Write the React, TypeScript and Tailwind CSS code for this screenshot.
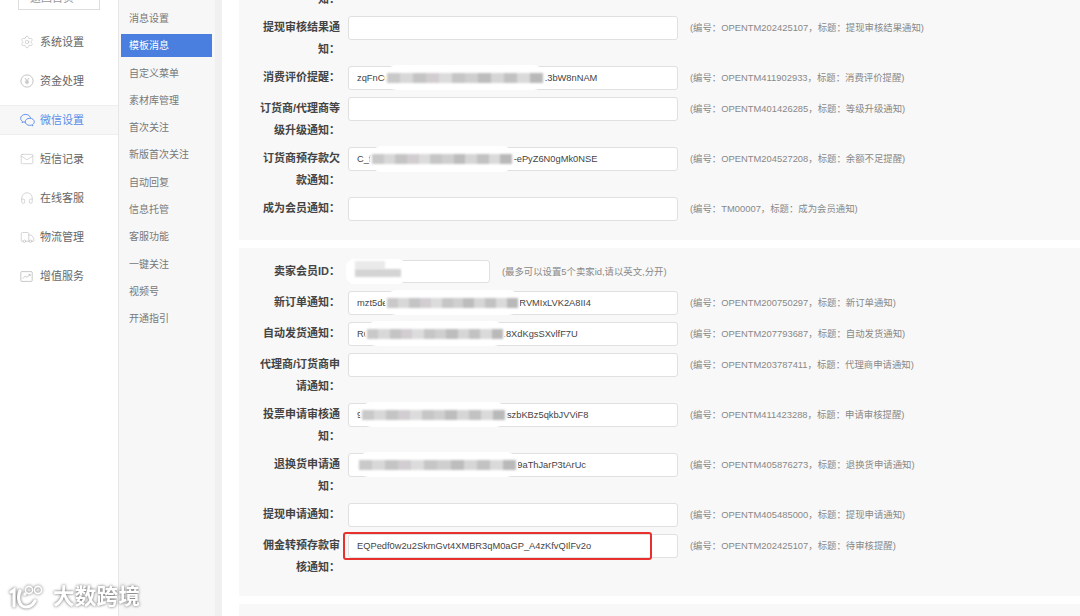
import { Settings, Mail, Headphones, Truck, ChevronDown } from "lucide-react";
import type { ReactNode } from "react";

const FONT = "font-['Liberation_Sans','Noto_Sans_CJK_SC',sans-serif]";

function YenIcon() {
  return (
    <svg viewBox="0 0 16 16" className="w-[14px] h-[14px]" fill="none" stroke="#bbb" strokeWidth="1">
      <circle cx="8" cy="8" r="7" />
      <path d="M5.6 4.6 8 7.6l2.4-3M8 7.6v4.2M5.8 8.2h4.4M5.8 10h4.4" />
    </svg>
  );
}

function WechatIcon() {
  return (
    <svg viewBox="0 0 16 16" className="w-[15px] h-[15px]" fill="none" stroke="#5b8de8" strokeWidth="1">
      <path d="M6 1.5C3 1.5.7 3.4.7 5.7c0 1.3.7 2.4 1.9 3.2l-.4 1.5 1.7-.9c.6.2 1.3.3 2 .3" />
      <path d="M11.3 5.2c-.6-2-2.7-3.7-5.3-3.7" />
      <path d="M10.4 5.6c-2.7 0-4.8 1.7-4.8 3.8s2.1 3.8 4.8 3.8c.6 0 1.2-.1 1.7-.3l1.6.9-.4-1.4c1.2-.7 1.9-1.8 1.9-3 0-2.1-2.1-3.8-4.8-3.8Z" />
    </svg>
  );
}

function ChartIcon() {
  return (
    <svg viewBox="0 0 16 16" className="w-[13px] h-[13px]" fill="none" stroke="#bbb" strokeWidth="1">
      <rect x="1" y="2" width="14" height="12" rx="1" />
      <path d="m3.5 10.5 3-3 2 1.5 4-3.5M10.5 5.5h2v2" />
    </svg>
  );
}

const sideItems: { name: string; icon: ReactNode; active?: boolean }[] = [
  { name: "系统设置", icon: <Settings className="w-[14px] h-[14px]" color="#bbb" strokeWidth={1} /> },
  { name: "资金处理", icon: <YenIcon /> },
  { name: "微信设置", icon: <WechatIcon />, active: true },
  { name: "短信记录", icon: <Mail className="w-[14px] h-[14px]" color="#bbb" strokeWidth={1} /> },
  { name: "在线客服", icon: <Headphones className="w-[14px] h-[14px]" color="#bbb" strokeWidth={1} /> },
  { name: "物流管理", icon: <Truck className="w-[15px] h-[15px]" color="#bbb" strokeWidth={1} /> },
  { name: "增值服务", icon: <ChartIcon /> },
];

const subItems = [
  "消息设置",
  "模板消息",
  "自定义菜单",
  "素材库管理",
  "首次关注",
  "新版首次关注",
  "自动回复",
  "信息托管",
  "客服功能",
  "一键关注",
  "视频号",
  "开通指引",
];

// the pixelated cover over a hidden template id
const greys = ["#c9c9c9", "#d8d8d8", "#c4c4c4", "#d2cdd0", "#dcdcdc", "#c6c6c6", "#cfcfcf", "#bdbdbd", "#d6d6d6", "#c2c2c2", "#dadada", "#b9b9b9"];

function Smear({ className }: { className: string }) {
  return (
    <div className={`absolute bg-white rounded-xl flex items-center px-[2px] ${className}`}>
      <div className="flex flex-1 h-[10px] blur-[1px]">
        {greys.map((c, i) => (
          <div key={i} className="flex-1" style={{ backgroundColor: c }} />
        ))}
      </div>
    </div>
  );
}

type Row = {
  label: string;
  value?: string;
  hint: string;
  smear?: string;
  red?: boolean;
};

const zeros = (n: number) => "0".repeat(n);

const topRows: Row[] = [
  { label: "提现申请审核通知：", hint: "" },
  { label: "提现审核结果通知：", hint: "(编号：OPENTM202425107，标题：提现审核结果通知)" },
  {
    label: "消费评价提醒：",
    value: "zqFnC" + zeros(31) + ".3bW8nNAM",
    hint: "(编号：OPENTM411902933，标题：消费评价提醒)",
    smear: "left-[37px] w-[160px] -top-[1px] h-[25px]",
  },
  { label: "订货商/代理商等级升级通知：", hint: "(编号：OPENTM401426285，标题：等级升级通知)" },
  {
    label: "订货商预存款欠款通知：",
    value: "C_f" + zeros(27) + ".-ePyZ6N0gMk0NSE",
    hint: "(编号：OPENTM204527208，标题：余额不足提醒)",
    smear: "left-[22px] w-[144px] -top-[1px] h-[26px]",
  },
  { label: "成为会员通知：", hint: "(编号：TM00007，标题：成为会员通知)" },
];

const bottomRows: Row[] = [
  {
    label: "新订单通知：",
    value: "mzt5de" + zeros(25) + ".RVMIxLVK2A8II4",
    hint: "(编号：OPENTM200750297，标题：新订单通知)",
    smear: "left-[37px] w-[135px] -top-[1px] h-[25px]",
  },
  {
    label: "自动发货通知：",
    value: "R6" + zeros(26) + ".8XdKgsSXvlfF7U",
    hint: "(编号：OPENTM207793687，标题：自动发货通知)",
    smear: "left-[17px] w-[140px] -top-[1px] h-[25px]",
  },
  { label: "代理商/订货商申请通知：", hint: "(编号：OPENTM203787411，标题：代理商申请通知)" },
  {
    label: "投票申请审核通知：",
    value: "9" + zeros(28) + "szbKBz5qkbJVViF8",
    hint: "(编号：OPENTM411423288，标题：申请审核提醒)",
    smear: "left-[12px] w-[147px] -top-[1px] h-[25px]",
  },
  {
    label: "退换货申请通知：",
    value: zeros(31) + "9aThJarP3tArUc",
    hint: "(编号：OPENTM405876273，标题：退换货申请通知)",
    smear: "left-[9px] w-[161px] -top-[1px] h-[25px]",
  },
  { label: "提现申请通知：", hint: "(编号：OPENTM405485000，标题：提现申请通知)" },
  {
    label: "佣金转预存款审核通知：",
    value: "EQPedf0w2u2SkmGvt4XMBR3qM0aGP_A4zKfvQIlFv2o",
    hint: "(编号：OPENTM202425107，标题：待审核提醒)",
    red: true,
  },
];

function FormRow({ row }: { row: Row }) {
  return (
    <div className="flex items-start min-h-[31px]">
      <label className="w-[85px] ml-[16px] pb-[6px] text-right text-[11px] leading-[22px] font-bold text-[#444]">
        {row.label}
      </label>
      <div className="relative ml-[8px] w-[330px] h-[24px]">
        <input
          readOnly
          value={row.value ?? ""}
          className="block w-full h-full bg-white border border-[#e0e0e0] rounded-[3px] pl-[8px] text-[9.3px] text-[#444] outline-none"
        />
        {row.smear && <Smear className={row.smear} />}
        {row.red && (
          <div className="absolute -left-[5px] -top-[2px] w-[309px] h-[28px] border-2 border-[#e8312f] rounded-[3px]" />
        )}
      </div>
      {row.hint && <span className="ml-[12px] text-[9.4px] leading-[24px] text-[#888]">{row.hint}</span>}
    </div>
  );
}

function Watermark() {
  return (
    <div className="absolute left-[9px] bottom-[5px] flex items-center gap-[4px] [filter:drop-shadow(0_0_1.5px_rgba(70,70,70,0.85))]">
      <svg viewBox="0 0 40 28" className="w-[40px] h-[28px]" fill="none" stroke="#fff" strokeWidth="3.2" strokeLinecap="round">
        <path d="M2 9 5 7v16" />
        <path d="M11 8c-3 7-1 16 6 16 4 0 7-2.5 9-6" />
        <circle cx="20" cy="7" r="3.6" strokeWidth="1.6" />
        <circle cx="29" cy="7" r="3.6" strokeWidth="1.6" />
        <circle cx="16" cy="11" r="1" strokeWidth="1.4" />
      </svg>
      <span className="text-[21.6px] leading-[28px] font-bold text-white tracking-[0.2px]">大数跨境</span>
    </div>
  );
}

export default function App() {
  return (
    <div className={`relative flex h-[616px] w-[1080px] overflow-hidden bg-white ${FONT}`}>
      <aside className="w-[118px] shrink-0 bg-white">
        <div className="mx-[18px] -mt-[14px] h-[24px] border border-[#ddd] flex items-center justify-center gap-1 text-[11px] text-[#999]">
          返回首页
          <ChevronDown className="w-[10px] h-[10px]" />
        </div>
        <nav className="mt-[17px]">
          {sideItems.map((item) => (
            <div
              key={item.name}
              className={`flex items-center h-[30px] mb-[9px] pl-[20px] text-[11px] ${
                item.active ? "bg-[#f7f7f7] border-y border-[#eee] text-[#5b8de8]" : "text-[#666]"
              }`}
            >
              <span className="w-[20px] flex items-center">{item.icon}</span>
              {item.name}
            </div>
          ))}
        </nav>
      </aside>

      <div className="w-[97px] shrink-0 bg-[#f7f7f7] border-l border-[#e6e6e6] pt-[7px]">
        {subItems.map((name) => (
          <div
            key={name}
            className={`flex items-center h-[23px] mb-[4.3px] ml-[2px] mr-[3px] pl-[8px] text-[10px] ${
              name === "模板消息" ? "bg-[#4a7fe0] text-white" : "text-[#777]"
            }`}
          >
            {name}
          </div>
        ))}
      </div>

      <div className="w-[7px] shrink-0 bg-[#f0f0f0]" />

      <main className="flex-1 pl-[17px] -mt-[34px] flex flex-col gap-[8px]">
        <section className="bg-[#f8f8f8] pb-[12px]">
          {topRows.map((row) => (
            <FormRow key={row.label} row={row} />
          ))}
        </section>
        <section className="bg-[#f8f8f8] pt-[12px] pb-[12px]">
          <div className="flex items-start min-h-[31px]">
            <label className="w-[85px] ml-[16px] text-right text-[11px] leading-[22px] font-bold text-[#444]">
              卖家会员ID：
            </label>
            <div className="relative ml-[8px] w-[142px] h-[23px]">
              <input readOnly className="block w-full h-full bg-white border border-[#e0e0e0] rounded-[3px] outline-none" />
              <div className="absolute -left-[2px] -top-[1px] w-[60px] h-[25px] bg-white rounded-lg flex flex-col pl-[9px] pt-[2px] gap-0">
                <div className="w-[30px] h-[8px] bg-[#eaeaea] blur-[1px]" />
                <div className="w-[46px] h-[8px] bg-[#d4d4d4] blur-[1px]" />
              </div>
            </div>
            <span className="ml-[12px] text-[9.4px] leading-[23px] text-[#888]">(最多可以设置5个卖家id,请以英文,分开)</span>
          </div>
          {bottomRows.map((row) => (
            <FormRow key={row.label} row={row} />
          ))}
        </section>
        <section className="bg-[#f8f8f8] flex-1" />
      </main>

      <Watermark />
    </div>
  );
}
